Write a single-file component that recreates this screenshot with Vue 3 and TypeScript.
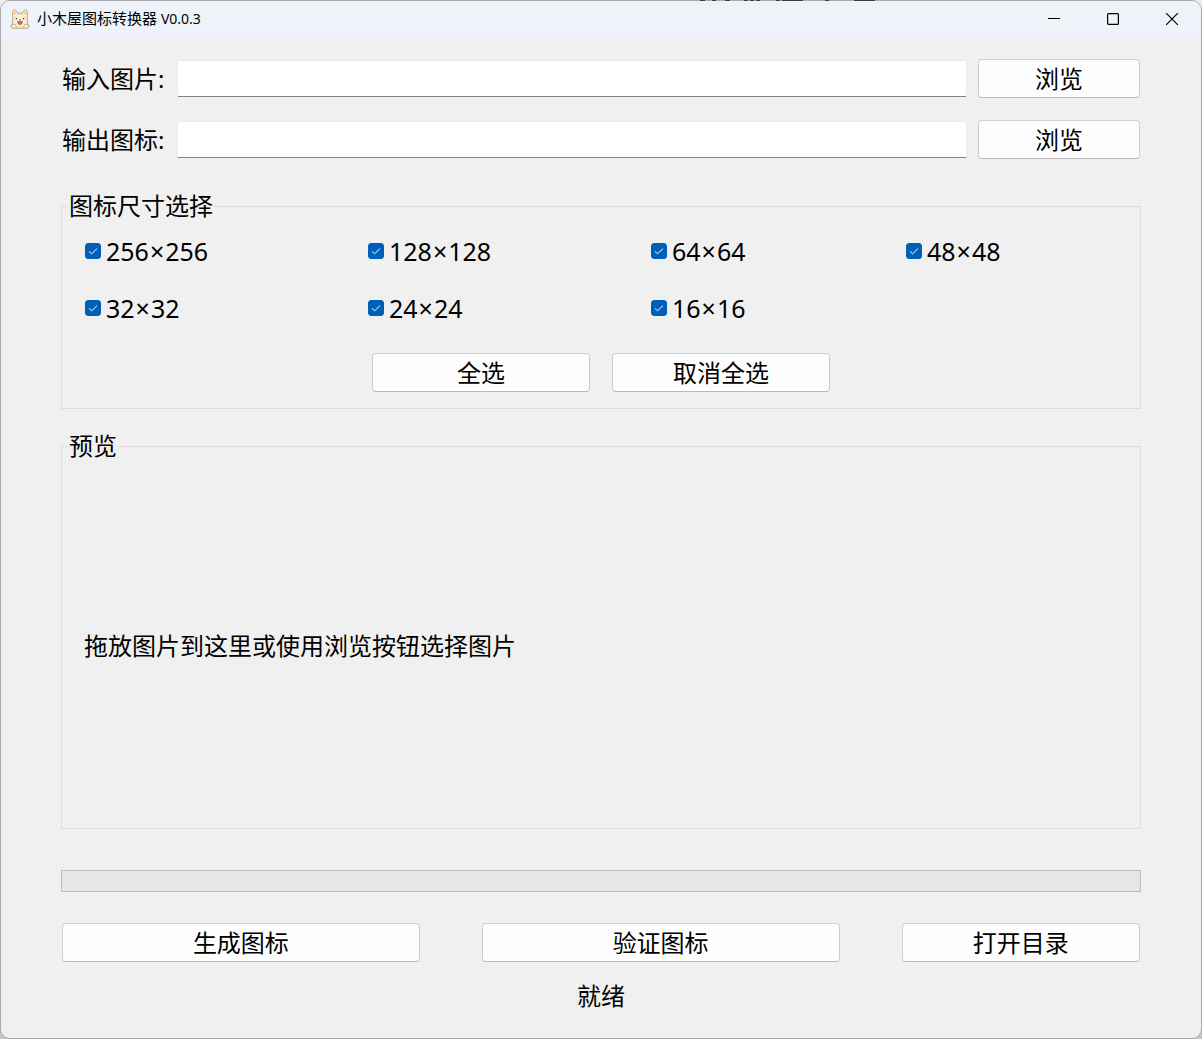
<script setup lang="ts">
import { ref } from 'vue'

interface SizeOption {
  size: number
  checked: boolean
}

const inputPath = ref('')
const outputPath = ref('')
const progress = ref(0)
const sizes = ref<SizeOption[]>(
  [256, 128, 64, 48, 32, 24, 16].map((size) => ({ size, checked: true })),
)

function setAll(checked: boolean): void {
  sizes.value.forEach((option) => {
    option.checked = checked
  })
}
</script>

<template>
  <div class="desktop">
    <div class="window">
      <header class="titlebar">
        <svg class="app-icon" viewBox="0 0 20 20" aria-hidden="true">
          <path d="M3 9.500C2.200 5.500 2.600 1 4.200.7c1.700.2 2.900 2.100 3.600 3.800a8 8 0 0 1 4.400 0C12.900 2.800 14.100.9 15.800.7c1.600.3 2 4.800 1.200 8.800.9 2 .9 3.600.2 5.500l1.600 1c.9 2-.3 3.200-2 3.200H3.200c-1.700 0-2.900-1.200-2-3.200l1.600-1c-.7-1.900-.7-3.500.2-5.500z" fill="#fcebcb" stroke="#b08f68" stroke-width=".8" />
          <path d="M3.900 6.200c-.1-2 .1-3.300.7-3.600.7.200 1.100 1 1.500 2.200zM16.100 6.200c.1-2-.1-3.300-.7-3.600-.7.200-1.100 1-1.500 2.200z" fill="#f3c795" />
          <ellipse cx="10" cy="12" rx="4" ry="3.200" fill="#fffaf0" />
          <circle cx="6.500" cy="9.800" r=".8" fill="#4b3326" />
          <circle cx="13.500" cy="9.800" r=".8" fill="#4b3326" />
          <path d="M8.800 10.400h2.400L10 11.800z" fill="#3b2a22" />
          <path d="M7.500 12.300q1.300.6 2.500-.3 1.200.900 2.500.3-.2 3.300-2.500 3.300t-2.500-3.300z" fill="#d9684a" stroke="#6b3c2a" stroke-width=".5" />
          <path d="M1.500 16.200q2.300-1.600 4.500.2.800 1.600-.4 2.600M18.500 16.200q-2.300-1.600-4.500.2-.8 1.600.4 2.600" fill="#fff6e4" stroke="#b08f68" stroke-width=".7" />
        </svg>
        <h1 class="title">小木屋图标转换器 <span class="version">V0.0.3</span></h1>
        <button class="caption" type="button" aria-label="最小化">
          <svg viewBox="0 0 12 12"><path d="M0 5.500h12" /></svg>
        </button>
        <button class="caption" type="button" aria-label="最大化">
          <svg viewBox="0 0 12 12"><rect x=".6" y=".6" width="10.800" height="10.800" rx="1" /></svg>
        </button>
        <button class="caption" type="button" aria-label="关闭">
          <svg viewBox="0 0 12 12"><path d="M0 0l12 12M12 0L0 12" /></svg>
        </button>
      </header>

      <main class="content">
        <div class="file-row">
          <label for="input-path">输入图片:</label>
          <input id="input-path" v-model="inputPath" class="path" type="text" />
          <button class="btn browse" type="button">浏览</button>
        </div>
        <div class="file-row">
          <label for="output-path">输出图标:</label>
          <input id="output-path" v-model="outputPath" class="path" type="text" />
          <button class="btn browse" type="button">浏览</button>
        </div>

        <fieldset class="group sizes">
          <legend>图标尺寸选择</legend>
          <div class="size-grid">
            <label v-for="option in sizes" :key="option.size" class="size">
              <input v-model="option.checked" class="tick" type="checkbox" />
              <span>{{ option.size }}<span class="times">×</span>{{ option.size }}</span>
            </label>
          </div>
          <div class="select-row">
            <button class="btn" type="button" @click="setAll(true)">全选</button>
            <button class="btn" type="button" @click="setAll(false)">取消全选</button>
          </div>
        </fieldset>

        <fieldset class="group preview">
          <legend>预览</legend>
          <p class="hint">拖放图片到这里或使用浏览按钮选择图片</p>
        </fieldset>

        <progress class="progress" max="100" :value="progress" aria-label="进度"></progress>

        <div class="actions">
          <button class="btn" type="button">生成图标</button>
          <button class="btn" type="button">验证图标</button>
          <button class="btn" type="button">打开目录</button>
        </div>
        <p class="status" role="status">就绪</p>
      </main>
    </div>
    <!-- text of the page behind, showing along the window's top edge -->
    <svg class="behind" width="180" height="1" aria-hidden="true">
      <path d="M0 0h5v1H0zM12 0h4v1h-4zM25 0h5v1h-5zM44 0h4v1h-4zM50 0h4v1h-4zM56 0h4v1h-4zM76 0h4v1h-4zM82 0h21v1H82zM125 0h4v1h-4zM154 0h21v1h-21z" fill="#403c40" />
    </svg>
  </div>
</template>

<style>
body {
  margin: 0;
}
</style>

<style scoped>
.desktop {
  position: relative;
  display: flex;
  min-height: 100vh;
  background: linear-gradient(#eeeeee, #c4c4c4);
  color: #000;
  font-family: 'Noto Sans', 'Noto Sans CJK SC', sans-serif;
  font-size: 24px;
  line-height: 32px;
}

.behind {
  position: absolute;
  top: 0;
  left: 700px;
}

.window {
  flex: 1;
  display: flex;
  flex-direction: column;
  box-sizing: border-box;
  border: 1px solid #a9a9a9;
  border-radius: 10px;
  background: #f0f0f0;
  overflow: hidden;
}

.titlebar {
  display: flex;
  align-items: center;
  box-sizing: border-box;
  height: 37px;
  padding: 0 0 2px 9px;
  background: #eef3f9;
}

.app-icon {
  width: 20px;
  height: 20px;
}

.title {
  flex: 1;
  margin: 0 0 0 7px;
  font-size: 15px;
  font-weight: 400;
  line-height: 20px;
}

.version {
  font-size: 14px;
}

.caption {
  display: flex;
  align-items: center;
  justify-content: center;
  width: 59px;
  height: 35px;
  padding: 0;
  border: 0;
  background: none;
}

.caption svg {
  width: 12px;
  height: 12px;
  fill: none;
  stroke: #000;
  stroke-width: 1.2;
}

.content {
  flex: 1;
  display: flex;
  flex-direction: column;
  padding: 21px 60px 26px;
}

.file-row {
  display: flex;
  align-items: center;
  margin: 0 1px 22px;
}

.file-row label {
  width: 115px;
}

.path {
  flex: 1;
  min-width: 0;
  height: 37px;
  box-sizing: border-box;
  margin-right: 11px;
  padding: 0 8px;
  border: 1px solid #e8e8e8;
  border-bottom-color: #828282;
  border-radius: 2px;
  background: #fff;
  font: inherit;
  outline: none;
}

.btn {
  height: 39px;
  box-sizing: border-box;
  padding: 0;
  border: 1px solid #cfcfcf;
  border-bottom-color: #b8b8b8;
  border-radius: 4px;
  background: #fdfdfd;
  color: #000;
  font: inherit;
}

.browse {
  width: 162px;
}

.group {
  min-width: 0;
  margin: 0;
  border: 1px solid #dcdcdc;
}

.group legend {
  margin-left: -16px;
  padding: 0 1px;
}

.sizes {
  margin-top: 9px;
  padding: 13px 22px 16px;
}

.size-grid {
  display: grid;
  grid-template-columns: 283fr 283fr 255fr 213fr;
  row-gap: 25px;
}

.size {
  display: flex;
  align-items: center;
  gap: 5px;
  padding-left: 1px;
  font-size: 25px;
}

.times {
  margin: 0 1px;
}

.tick {
  appearance: none;
  width: 16px;
  height: 16px;
  margin: 0;
  border: 1px solid #868686;
  border-radius: 3px;
  background: #fff;
}

.tick:checked {
  border-color: #005fb8;
  background: #005fb8 url("data:image/svg+xml,%3Csvg xmlns='http://www.w3.org/2000/svg' viewBox='0 0 14 14'%3E%3Cpath d='M3 7.300l2.600 2.500L11 4.600' fill='none' stroke='white'/%3E%3C/svg%3E") center / 14px 14px;
}

.select-row {
  display: flex;
  justify-content: center;
  gap: 22px;
  margin-top: 29px;
}

.select-row .btn {
  width: 218px;
}

.preview {
  flex: 1;
  display: flex;
  align-items: center;
  margin-top: 21px;
  padding: 2px 22px 0;
}

.hint {
  margin: 0;
}

.progress {
  appearance: none;
  display: block;
  width: 100%;
  height: 22px;
  box-sizing: border-box;
  margin-top: 41px;
  border: 1px solid #bcbcbc;
  background: #e6e6e6;
}

.progress::-webkit-progress-bar {
  background: #e6e6e6;
}

.progress::-webkit-progress-value {
  background: #06b025;
}

.actions {
  display: grid;
  grid-template-columns: 3fr 3fr 2fr;
  column-gap: 62px;
  margin: 31px 1px 0;
}

.status {
  margin: 18px 0 0;
  text-align: center;
}
</style>
